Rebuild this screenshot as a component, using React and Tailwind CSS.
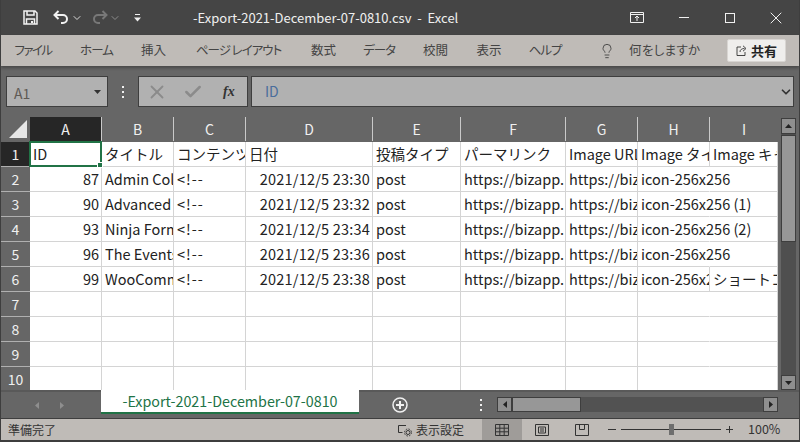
import { ChevronDown, Lightbulb, X, Check } from "lucide-react";

const font = "font-['Noto_Sans_CJK_JP','Noto_Sans',sans-serif]";
const ribbonTabs = [
  ["ファイル", "w-[64px] tracking-[-1.5px]"],
  ["ホーム", "w-[63px] tracking-[-1px]"],
  ["挿入", "w-[51px]"],
  ["ページ レイアウト", "w-[119px] tracking-[-1px]"],
  ["数式", "w-[51px]"],
  ["データ", "w-[60px] tracking-[-1px]"],
  ["校閲", "w-[53px]"],
  ["表示", "w-[54px]"],
  ["ヘルプ", "w-[58px] tracking-[-1px]"],
];
const columns = ["A", "B", "C", "D", "E", "F", "G", "H", "I"];
const gridCols = "grid grid-cols-[72px_72px_72px_127px_88px_105px_72px_72px_68px]";

const rows = [
  ["ID", "タイトル", "コンテンツ", "日付", "投稿タイプ", "パーマリンク", "Image URL", "Image タイトル", "Image キャプション"],
  ["87", "Admin Columns", "<!--", "2021/12/5 23:30", "post", "https://bizapp.", "https://bizapp", "icon-256x256", ""],
  ["90", "Advanced Custom", "<!--", "2021/12/5 23:32", "post", "https://bizapp.", "https://bizapp", "icon-256x256 (1)", ""],
  ["93", "Ninja Forms", "<!--", "2021/12/5 23:34", "post", "https://bizapp.", "https://bizapp", "icon-256x256 (2)", ""],
  ["96", "The Events", "<!--", "2021/12/5 23:36", "post", "https://bizapp.", "https://bizapp", "icon-256x256", ""],
  ["99", "WooCommerce", "<!--", "2021/12/5 23:38", "post", "https://bizapp.", "https://bizapp", "icon-256x256", "ショートコード"],
  ["", "", "", "", "", "", "", "", ""],
  ["", "", "", "", "", "", "", "", ""],
  ["", "", "", "", "", "", "", "", ""],
  ["", "", "", "", "", "", "", "", ""],
];

function Cell({ value, col, row }) {
  const isNumber = col === 0 && row > 0;
  const isDate = col === 3 && row > 0;
  const isComment = col === 2 && row > 0;
  const spills = col === 7 && row > 0 && !rows[row][8];
  const last = row === 9;
  return (
    <div
      className={`relative border-r border-[#d4d4d4] pl-[3px] pr-[2px] leading-[24px] whitespace-nowrap text-[14.5px] text-[#222] ${
        last ? "h-[23px]" : "h-[25px] border-b"
      } ${spills ? "overflow-visible border-r-transparent z-10" : "overflow-hidden"} ${isNumber || isDate ? "text-right" : ""} ${isDate ? "tracking-[0.2px]" : ""} ${isComment ? "tracking-[1px]" : ""}`}
    >
      {value}
    </div>
  );
}

function TitleBar() {
  return (
    <div className="flex h-[35px] items-center bg-[#454545] text-[#f0f0f0]">
      <svg width="15" height="15" viewBox="0 0 15 15" className="ml-[22px]" fill="none" stroke="#f2f2f2" strokeWidth="1.5">
        <path d="M1 1h11l2 2v11H1z" />
        <path d="M4 1v4h7V1M3.500 14V9h8v5" />
        <path d="M8 11h2v2H8z" fill="#f2f2f2" stroke="none" />
      </svg>
      <svg width="16" height="15" viewBox="0 0 16 15" className="ml-[15px]" fill="none" stroke="#f2f2f2" strokeWidth="2">
        <path d="M5.500 1 1.500 5l4 4M2 5h8a4 4 0 0 1 4 4v0a4 4 0 0 1-4 4H8" />
      </svg>
      <ChevronDown size={12} strokeWidth={2} className="ml-[2px] text-[#d8d8d8]" />
      <svg width="16" height="15" viewBox="0 0 16 15" className="ml-[9px]" fill="none" stroke="#787878" strokeWidth="2">
        <path d="M10.500 1l4 4-4 4M14 5H6a4 4 0 0 0-4 4v0a4 4 0 0 0 4 4h2" />
      </svg>
      <ChevronDown size={12} strokeWidth={2} className="ml-[1px] text-[#8c8c8c]" />
      <svg width="7" height="8" viewBox="0 0 7 8" className="ml-[13px]" fill="#f0f0f0">
        <path d="M1 0h5v1H1zM0 3.500h7L3.500 7.500z" />
      </svg>
      <div className={`ml-[52px] flex-1 text-[13px] ${font}`}>
        -Export-2021-December-07-0810.csv&nbsp; -&nbsp; Excel
      </div>
      <svg width="14" height="11" viewBox="0 0 14 11" fill="none" stroke="#f0f0f0">
        <path d="M.5.5h13v10H.500zM.5 2.500h13M7 9V4M5 6l2-2 2 2" />
      </svg>
      <div className="ml-[35px] h-px w-[10px] bg-[#f0f0f0]" />
      <div className="ml-[36px] size-[10px] border border-[#f0f0f0]" />
      <X size={20} strokeWidth={1.2} className="ml-[31px] mr-[13px]" />
    </div>
  );
}

function RibbonTabs() {
  return (
    <div className={`relative z-20 flex h-[31px] items-center bg-[#bfbbb7] text-[12.5px] text-[#444] shadow-[0_2px_3px_rgba(0,0,0,0.3)] [font-feature-settings:'palt'] ${font}`}>
      {ribbonTabs.map(([label, width]) => (
        <div key={label} className={`${width} text-center`}>{label}</div>
      ))}
      <Lightbulb size={16} strokeWidth={1.2} className="ml-[25px] text-[#333]" />
      <div className="ml-[14px] tracking-[0.3px]">何をしますか</div>
      <div className="ml-auto mr-[13px] flex h-[23px] w-[59px] items-center justify-center gap-[4px] rounded-[2px] border border-[#d8d5d2] bg-[#efeeec] text-[13px] font-bold text-[#222]">
        <svg width="11" height="11" viewBox="0 0 11 11" fill="none" stroke="#333" strokeWidth="0.9">
          <path d="M5 2H1v8.500h8V7M4 7c0-2.500 2-3.500 4.500-3.500M7 .8l3 2.700-3 2.700" />
        </svg>
        <span>共有</span>
      </div>
    </div>
  );
}

function FormulaBar() {
  return (
    <div className="flex h-[44px] items-start bg-[#666666] pt-[10px] pl-[5px] pr-[5px]">
      <div className="flex h-[31px] w-[102px] items-center justify-between border border-[#3e3e3e] bg-[#b1b1b1] pl-[7px] pr-[6px] text-[14px] text-[#5f5a55]">
        <span className={`pt-[3px] ${font}`}>A1</span>
        <svg width="7" height="4" viewBox="0 0 7 4" fill="#333"><path d="M0 0h7L3.500 4z" /></svg>
      </div>
      <div className="flex h-[31px] w-[30px] flex-col items-center justify-center gap-[3px]">
        <div className="size-[2px] bg-[#f0f0f0]" />
        <div className="size-[2px] bg-[#f0f0f0]" />
        <div className="size-[2px] bg-[#f0f0f0]" />
      </div>
      <div className="flex h-[31px] w-[110px] items-center border border-[#3e3e3e] bg-[#b1b1b1] pl-[7px]">
        <X size={22} strokeWidth={2} className="text-[#8b8b8b]" />
        <Check size={20} strokeWidth={3} className="ml-[15px] text-[#8b8b8b]" />
        <span className="ml-[20px] font-['Liberation_Serif',serif] text-[14px] font-bold italic text-[#333]">fx</span>
      </div>
      <div className="ml-[3px] flex h-[31px] flex-1 items-center justify-between border border-[#3e3e3e] bg-[#b1b1b1] pl-[13px]">
        <span className={`text-[14px] text-[#4a6d9c] ${font}`}>ID</span>
        <ChevronDown size={14} strokeWidth={3} className="text-[#333]" />
      </div>
    </div>
  );
}

function Sheet() {
  return (
    <div className="flex h-[280px] bg-[#666666] pt-[7px]">
      <div className="w-[777px]">
        <div className="flex h-[25px]">
          <div className="flex h-full w-[29px] items-end justify-end pb-[4px] pr-[3px]">
            <svg width="18" height="18" viewBox="0 0 18 18"><path d="M18 0v18H0z" fill="#e6e6e6" /></svg>
          </div>
          <div className={`${gridCols} flex-1 ${font}`}>
            {columns.map((c, i) => (
              <div
                key={c}
                className={`h-[24px] text-center text-[14px] leading-[24px] text-[#f0f0f0] ${i === 0 ? "bg-[#262626]" : ""} ${i === 8 ? "" : "border-r border-[#c9c9c9]"}`}
              >
                {c}
              </div>
            ))}
          </div>
        </div>
        <div className="flex">
          <div className={`w-[29px] ${font}`}>
            {rows.map((_, i) => (
              <div
                key={i}
                className={`text-center text-[14px] leading-[24px] text-[#f0f0f0] ${i === 0 ? "bg-[#262626]" : ""} ${i === 9 ? "h-[23px]" : "h-[25px] border-b border-[#b0b0b0]"}`}
              >
                {i + 1}
              </div>
            ))}
          </div>
          <div className={`relative flex-1 bg-white ${font}`}>
            <div className={gridCols}>
              {rows.map((row, r) =>
                row.map((value, c) => <Cell key={`${r}-${c}`} value={value} col={c} row={r} />)
              )}
            </div>
            {/* selected cell A1 */}
            <div className="absolute left-[-1px] top-[-1px] z-20 h-[26px] w-[73px] border-2 border-[#217346]">
              <div className="absolute bottom-[-3px] right-[-3px] size-[6px] border border-white bg-[#217346]" />
            </div>
          </div>
        </div>
      </div>
      <div className="ml-[3px] mt-px flex h-[272px] w-[15px] flex-col bg-[#4f4f4f]">
        <div className="flex h-[16px] items-center justify-center border border-[#3e3e3e] bg-[#8f8f8f]">
          <svg width="7" height="4" viewBox="0 0 7 4" fill="#222"><path d="M3.500 0 7 4H0z" /></svg>
        </div>
        <div className="mt-px h-[107px] border border-[#3e3e3e] bg-[#979797]" />
        <div className="mt-auto flex h-[15px] items-center justify-center border border-[#3e3e3e] bg-[#8f8f8f]">
          <svg width="7" height="4" viewBox="0 0 7 4" fill="#222"><path d="M0 0h7L3.500 4z" /></svg>
        </div>
      </div>
    </div>
  );
}

function TabBar() {
  return (
    <div className="flex h-[29px] border-t-2 border-b border-t-[#595959] border-b-[#3e3e3e] bg-[#666666]">
      <div className="flex w-[100px] items-center justify-center gap-[21px] pr-[4px]">
        <svg width="4" height="7" viewBox="0 0 4 7" fill="#8e8e8e"><path d="M4 0v7L0 3.500z" /></svg>
        <svg width="4" height="7" viewBox="0 0 4 7" fill="#8e8e8e"><path d="M0 0v7l4-3.500z" /></svg>
      </div>
      <div className={`-mt-[2px] flex h-[24px] w-[258px] items-center justify-center border-b-2 border-[#217346] bg-white text-[14.3px] text-[#217346] ${font}`}>
        -Export-2021-December-07-0810
      </div>
      <svg width="16" height="16" viewBox="0 0 16 16" className="ml-[33px] mt-[5px]" fill="none" stroke="#f0f0f0" strokeWidth="1.500">
        <circle cx="8" cy="8" r="7" />
        <path d="M8 4v8M4 8h8" strokeWidth="2" />
      </svg>
      <div className="ml-[72px] mt-[7px] flex flex-col gap-[3px]">
        <div className="size-[2px] bg-[#f0f0f0]" />
        <div className="size-[2px] bg-[#f0f0f0]" />
        <div className="size-[2px] bg-[#f0f0f0]" />
      </div>
      <div className="ml-[15px] mt-[5px] flex h-[15px] w-[281px] bg-[#525252]">
        <div className="flex w-[15px] items-center justify-center border border-[#3e3e3e] bg-[#8f8f8f]">
          <svg width="4" height="7" viewBox="0 0 4 7" fill="#222"><path d="M4 0v7L0 3.500z" /></svg>
        </div>
        <div className="w-[69px] border border-[#3e3e3e] bg-[#979797]" />
        <div className="ml-auto flex w-[15px] items-center justify-center border border-[#3e3e3e] bg-[#8f8f8f]">
          <svg width="4" height="7" viewBox="0 0 4 7" fill="#222"><path d="M0 0v7l4-3.500z" /></svg>
        </div>
      </div>
    </div>
  );
}

function StatusBar() {
  return (
    <div className={`flex h-[23px] items-center border-b-2 border-[#3e3e3e] bg-[#bfbbb7] pl-[7px] text-[12px] text-[#333] ${font}`}>
      <span>準備完了</span>
      <svg width="15" height="14" viewBox="0 0 15 14" className="ml-[342px]" fill="none" stroke="#333">
        <path d="M8 2.500H.5v7h4" />
        <circle cx="10" cy="9.500" r="2" />
        <circle cx="10" cy="9.500" r="3.500" strokeDasharray="1.500 1.250" />
      </svg>
      <span className="ml-[3px]">表示設定</span>
      <div className="ml-[18px] flex h-full w-[40px] items-center justify-center bg-[#9f9c99]">
        <svg width="14" height="12" viewBox="0 0 14 12" fill="none" stroke="#333">
          <path d="M.5.5h13v11H.500zM.5 4.200h13M.5 7.800h13M4.800.5v11M9.200.5v11" />
        </svg>
      </div>
      <svg width="14" height="12" viewBox="0 0 14 12" className="ml-[13px]" fill="none" stroke="#333">
        <path d="M.5.5h13v11H.500zM3.500 3h7v6h-7zM5 5h4M5 7h4" />
      </svg>
      <svg width="14" height="12" viewBox="0 0 14 12" className="ml-[26px]" fill="none" stroke="#333">
        <path d="M.5.5h13v11H.500zM4.500.5v5h5V.5" />
      </svg>
      <div className="ml-[19px] h-px w-[8px] bg-[#333]" />
      <div className="relative ml-[5px] h-px w-[100px] bg-[#333]">
        <div className="absolute left-[48px] top-[-5px] h-[11px] w-[5px] bg-[#6e6e6e]" />
      </div>
      <div className="relative ml-[5px] size-[7px]">
        <div className="absolute left-0 top-[3px] h-px w-[7px] bg-[#333]" />
        <div className="absolute left-[3px] top-0 h-[7px] w-px bg-[#333]" />
      </div>
      <span className="ml-[15px] text-[12.5px]">100%</span>
    </div>
  );
}

export default function App() {
  return (
    <div className="flex h-[442px] w-[800px] flex-col overflow-hidden border-x border-[#3e3e3e] bg-[#666666]">
      <TitleBar />
      <RibbonTabs />
      <FormulaBar />
      <Sheet />
      <TabBar />
      <StatusBar />
    </div>
  );
}
